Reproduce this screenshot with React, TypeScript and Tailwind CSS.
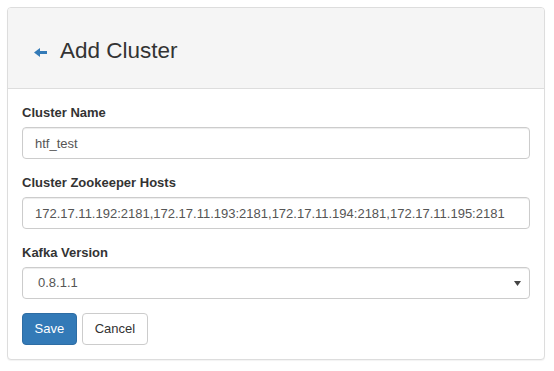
import React from "react";

function Field({ label, value }: { label: string; value: string }) {
  return (
    <div className="mb-[15px]">
      <div className="text-[13px] leading-[18px] font-bold text-[#333] mb-[5px]">{label}</div>
      <input
        readOnly
        defaultValue={value}
        className="block w-full h-[32px] px-[12px] border border-[#ccc] rounded-[4px] bg-white text-[13px] text-[#555] shadow-[inset_0_1px_1px_rgba(0,0,0,0.075)] outline-none"
        style={{ fontFamily: '"Liberation Sans", Arial, sans-serif' }}
      />
    </div>
  );
}

export default function App() {
  return (
    <div
      className="w-[554px] h-[371px] bg-white pt-[7px] pl-[7px]"
      style={{ fontFamily: '"Liberation Sans", Arial, sans-serif' }}
    >
      <div className="w-[538px] border border-[#ddd] rounded-[4px] bg-white shadow-[0_1px_1px_rgba(0,0,0,0.05)] overflow-hidden">
        <div className="h-[81px] bg-[#f5f5f5] border-b border-[#ddd] flex items-center pt-[6px] pl-[26px]">
          <svg width="13" height="9" viewBox="0 0 13 9" className="mr-[13px] mt-[2px]">
            <polygon points="0,4.5 6,0 6,9" fill="#337ab7" />
            <rect x="5" y="3" width="8" height="3" fill="#337ab7" />
          </svg>
          <h3 className="text-[22.5px] text-[#333] font-normal leading-[26px]">Add Cluster</h3>
        </div>
        <div className="pt-[15px] px-[14px] pb-[14px]">
          <Field label="Cluster Name" value="htf_test" />
          <Field
            label="Cluster Zookeeper Hosts"
            value="172.17.11.192:2181,172.17.11.193:2181,172.17.11.194:2181,172.17.11.195:2181"
          />
          <div className="mb-[14px]">
            <div className="text-[13px] leading-[18px] font-bold text-[#333] mb-[5px]">Kafka Version</div>
            <div className="flex items-center justify-between h-[32px] pl-[15px] pr-[8px] border border-[#ccc] rounded-[4px] bg-white text-[13px] text-[#555] shadow-[inset_0_1px_1px_rgba(0,0,0,0.075)]">
              <span>0.8.1.1</span>
              <svg width="7" height="5" viewBox="0 0 7 5">
                <polygon points="0,0 7,0 3.5,5" fill="#444" />
              </svg>
            </div>
          </div>
          <div className="flex gap-[5px]">
            <button
              className="h-[32px] px-[11.5px] rounded-[4px] bg-[#337ab7] border border-[#2e6da4] text-white text-[13px]"
              style={{ fontFamily: '"Liberation Sans", Arial, sans-serif' }}
            >
              Save
            </button>
            <button
              className="h-[32px] px-[12px] rounded-[4px] bg-white border border-[#ccc] text-[#333] text-[13px]"
              style={{ fontFamily: '"Liberation Sans", Arial, sans-serif' }}
            >
              Cancel
            </button>
          </div>
        </div>
      </div>
    </div>
  );
}
